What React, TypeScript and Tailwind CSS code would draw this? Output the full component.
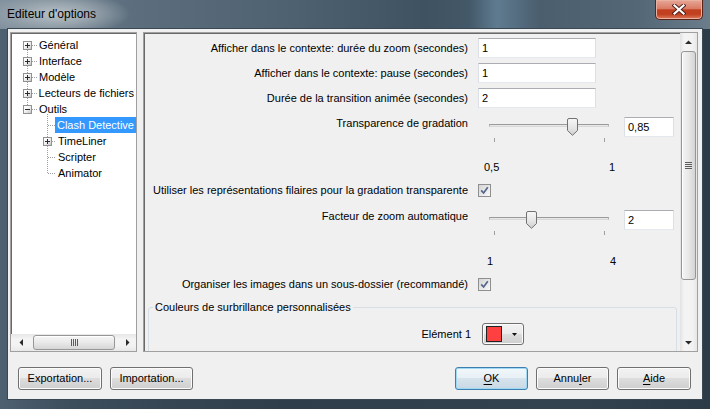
import React from "react";

const ui = "font-['Liberation_Sans','Arial',sans-serif]";

type TreeRow = { label: string; level: 0 | 1; box?: "plus" | "minus"; selected?: boolean };

const treeRows: TreeRow[] = [
  { label: "Général", level: 0, box: "plus" },
  { label: "Interface", level: 0, box: "plus" },
  { label: "Modèle", level: 0, box: "plus" },
  { label: "Lecteurs de fichiers", level: 0, box: "plus" },
  { label: "Outils", level: 0, box: "minus" },
  { label: "Clash Detective", level: 1, selected: true },
  { label: "TimeLiner", level: 1, box: "plus" },
  { label: "Scripter", level: 1 },
  { label: "Animator", level: 1 },
];

function ExpandBox({ minus }: { minus?: boolean }) {
  return (
    <span className="relative flex h-[9px] w-[9px] items-center justify-center border border-[#919191] bg-[linear-gradient(135deg,#ffffff_0%,#f4f4f4_45%,#c9c9c9_100%)]">
      <span className="absolute h-px w-[5px] bg-[#2b2b2b]" />
      {!minus && <span className="absolute h-[5px] w-px bg-[#2b2b2b]" />}
    </span>
  );
}

function TreeLines() {
  const dot = { stroke: "#a0a0a0", strokeDasharray: "1 1", shapeRendering: "crispEdges" as const };
  return (
    <svg className="absolute left-0 top-0" width="123" height="150">
      <line x1="15.5" y1="9" x2="15.5" y2="73" {...dot} />
      {[0, 1, 2, 3, 4].map((i) => (
        <line key={i} x1="20" y1={8.5 + 16 * i} x2="25" y2={8.5 + 16 * i} {...dot} />
      ))}
      <line x1="35.5" y1="77" x2="35.5" y2="137" {...dot} />
      {[5, 6, 7, 8].map((i) => (
        <line key={i} x1="36" y1={8.5 + 16 * i} x2="44" y2={8.5 + 16 * i} {...dot} />
      ))}
    </svg>
  );
}

function Arrow({ dir }: { dir: "up" | "down" | "left" | "right" }) {
  const paths = {
    up: "M0 4 L3.5 0.5 L7 4 Z",
    down: "M0 0 L3.5 3.5 L7 0 Z",
    left: "M4 0 L0.5 3.5 L4 7 Z",
    right: "M0 0 L3.5 3.5 L0 7 Z",
  };
  const horiz = dir === "left" || dir === "right";
  return (
    <svg width={horiz ? 4 : 7} height={horiz ? 7 : 4} viewBox={horiz ? "0 0 4 7" : "0 0 7 4"}>
      <path d={paths[dir]} fill="#2a2a2a" />
    </svg>
  );
}

function Tree() {
  return (
    <div className="flex h-[320px] w-[127px] flex-col border border-[#a0a0a0] bg-white shadow-[inset_1px_1px_0_#696969]">
      <div className="relative flex-1 pl-px pt-[4px]">
        <div className="relative">
          <TreeLines />
          {treeRows.map((r) => (
            <div key={r.label} className="relative flex h-[16px]">
              <div className={r.level === 0 ? "w-[25px] pl-[11px] pt-[4px]" : "w-[44px] pl-[31px] pt-[4px]"}>
                {r.box && <ExpandBox minus={r.box === "minus"} />}
              </div>
              <span
                className={
                  r.selected
                    ? "whitespace-nowrap bg-[#3399ff] px-[2px] leading-[16px] text-white"
                    : "whitespace-nowrap px-[2px] leading-[16px] text-black"
                }
              >
                {r.label}
              </span>
            </div>
          ))}
        </div>
      </div>
      <div className="flex h-[17px] items-center bg-[linear-gradient(180deg,#e6e6e6,#f4f4f4_30%,#f2f2f2_70%,#e8e8e8)] pl-px">
        <div className="flex h-[17px] w-[17px] items-center justify-center">
          <Arrow dir="left" />
        </div>
        <div className="ml-[4px] flex h-[15px] w-[82px] items-center justify-center rounded-[3px] border border-[#979797] bg-[linear-gradient(180deg,#f6f6f6,#e9e9e9_50%,#d6d6d6)] shadow-[inset_0_1px_0_#ffffff]">
          <svg width="7" height="7">
            {[0.5, 2.5, 4.5, 6.5].map((x) => (
              <line key={x} x1={x} y1="0" x2={x} y2="7" stroke="#5c5c5c" shapeRendering="crispEdges" />
            ))}
          </svg>
        </div>
        <div className="ml-auto flex h-[17px] w-[17px] items-center justify-center">
          <Arrow dir="right" />
        </div>
      </div>
    </div>
  );
}

function TextBox({ value, w }: { value: string; w: string }) {
  return (
    <div
      className={`flex h-[20px] ${w} items-center border border-t-[#abadb3] border-x-[#dbdfe6] border-b-[#e3e9ef] bg-white pl-[3px] leading-none`}
    >
      {value}
    </div>
  );
}

function CheckBox() {
  return (
    <span className="flex h-[13px] w-[13px] items-center justify-center border border-[#8e8f8f] bg-[#f4f4f4]">
      <span className="flex h-[11px] w-[11px] items-center justify-center bg-[linear-gradient(135deg,#d4d4d4,#f9f9f9)]">
        <svg width="9" height="9" viewBox="0 0 9 9">
          <path d="M1.2 4.4 L3.6 7 L7.8 1.3" stroke="#53648c" strokeWidth="1.7" fill="none" />
        </svg>
      </span>
    </span>
  );
}

function Slider({ center }: { center: number }) {
  return (
    <div className="relative h-[30px] w-[146px] pt-[9px]">
      <div className="ml-[11px] h-[3px] w-[120px] border border-t-[#9a9a9a] border-x-[#b4b4b4] border-b-[#d8d8d8] bg-[#e8e8e8]" />
      <div className="mt-[11px] flex">
        <span className="ml-[16px] h-[4px] w-px bg-[#a0a0a0]" />
        <span className="ml-[109px] h-[4px] w-px bg-[#a0a0a0]" />
      </div>
      <svg className="absolute top-[3px]" style={{ left: center - 5 }} width="11" height="18" viewBox="0 0 11 18">
        <defs>
          <linearGradient id={`th${center}`} x1="0" y1="0" x2="0" y2="1">
            <stop offset="0" stopColor="#f7f7f7" />
            <stop offset="0.6" stopColor="#e4e4e4" />
            <stop offset="1" stopColor="#cdcdcd" />
          </linearGradient>
        </defs>
        <path
          d="M0.5 2 Q0.5 0.5 2 0.5 H9 Q10.5 0.5 10.5 2 V12.5 L5.5 17.3 L0.5 12.5 Z"
          fill={`url(#th${center})`}
          stroke="#727272"
        />
      </svg>
    </div>
  );
}

function ColorButton() {
  return (
    <div className="ml-[11px] flex h-[22px] w-[42px] items-center rounded-[3px] border border-[#707070] bg-[linear-gradient(180deg,#f2f2f2_0%,#ebebeb_49%,#dddddd_50%,#cfcfcf_100%)] pl-[3px] shadow-[inset_0_0_0_1px_#fbfbfb]">
      <span className="h-[16px] w-[16px] border border-[#222222] bg-[#ff4040]" />
      <span className="ml-[10px] flex">
        <svg width="5" height="3" viewBox="0 0 5 3">
          <path d="M0 0 H5 L2.5 3 Z" fill="#111111" />
        </svg>
      </span>
    </div>
  );
}

function VScroll() {
  return (
    <div className="flex w-[17px] flex-col bg-[linear-gradient(90deg,#e2e2e2,#f4f4f4_25%,#f2f2f2_75%,#e6e6e6)]">
      <div className="flex h-[17px] items-center justify-center">
        <Arrow dir="up" />
      </div>
      <div className="flex-1 px-px pt-px">
        <div className="flex h-[229px] items-center justify-center rounded-[3px] border border-[#959595] bg-[linear-gradient(90deg,#f5f5f5,#e8e8e8_50%,#d4d4d4)] shadow-[inset_1px_0_0_#ffffff]">
          <svg width="7" height="8">
            {[0.5, 2.5, 4.5, 6.5].map((y) => (
              <line key={y} x1="0" y1={y} x2="7" y2={y} stroke="#5c5c5c" shapeRendering="crispEdges" />
            ))}
          </svg>
        </div>
      </div>
      <div className="flex h-[17px] items-center justify-center">
        <Arrow dir="down" />
      </div>
    </div>
  );
}

function FieldRow({ label, value }: { label: string; value: string }) {
  return (
    <div className="flex h-[20px] items-center">
      <div className="w-[324px] whitespace-nowrap text-right">{label}</div>
      <div className="ml-[10px]">
        <TextBox value={value} w="w-[118px]" />
      </div>
    </div>
  );
}

function SliderRow({ label, center, value }: { label: string; center: number; value: string }) {
  return (
    <div className="flex h-[30px]">
      <div className="w-[324px] whitespace-nowrap text-right leading-[16px]">{label}</div>
      <div className="ml-[10px] flex">
        <Slider center={center} />
        <div className="mt-[2px]">
          <TextBox value={value} w="w-[50px]" />
        </div>
      </div>
    </div>
  );
}

function CheckRow({ label }: { label: string }) {
  return (
    <div className="flex h-[16px] items-center">
      <div className="w-[324px] whitespace-nowrap text-right leading-[16px]">{label}</div>
      <div className="ml-[10px] flex">
        <CheckBox />
      </div>
    </div>
  );
}

function Panel() {
  return (
    <div className="flex h-[320px] w-[555px] border border-[#a0a0a0] bg-[#f0f0f0] shadow-[inset_1px_1px_0_#696969]">
      <div className="flex-1 overflow-hidden pt-[5px]">
        <FieldRow label="Afficher dans le contexte: durée du zoom (secondes)" value="1" />
        <div className="mt-[5px]">
          <FieldRow label="Afficher dans le contexte: pause (secondes)" value="1" />
        </div>
        <div className="mt-[5px]">
          <FieldRow label="Durée de la transition animée (secondes)" value="2" />
        </div>
        <div className="mt-[7px]">
          <SliderRow label="Transparence de gradation" center={94} value="0,85" />
        </div>
        <div className="mt-[14px] flex h-[16px] items-center leading-[16px]">
          <span className="ml-[340px] w-[125px]">0,5</span>
          <span>1</span>
        </div>
        <div className="mt-[7px]">
          <CheckRow label="Utiliser les représentations filaires pour la gradation transparente" />
        </div>
        <div className="mt-[10px]">
          <SliderRow label="Facteur de zoom automatique" center={53} value="2" />
        </div>
        <div className="mt-[15px] flex h-[16px] items-center leading-[16px]">
          <span className="ml-[343px] w-[123px]">1</span>
          <span>4</span>
        </div>
        <div className="mt-[7px]">
          <CheckRow label="Organiser les images dans un sous-dossier (recommandé)" />
        </div>
        <fieldset className="ml-[4px] mt-[7px] h-[80px] w-[529px] rounded-[3px] border border-[#d5dfe5]">
          <legend className="ml-[4px] px-[2px] leading-[16px]">Couleurs de surbrillance personnalisées</legend>
          <div className="mt-[8px] flex items-center">
            <div className="w-[322px] text-right">Elément 1</div>
            <ColorButton />
          </div>
        </fieldset>
      </div>
      <VScroll />
    </div>
  );
}

function WinButton({ children, w, isDefault }: { children: React.ReactNode; w: string; isDefault?: boolean }) {
  return (
    <button
      className={
        isDefault
          ? `flex h-[23px] ${w} items-center justify-center rounded-[3px] border border-[#3c7fb1] bg-[linear-gradient(180deg,#f2f7fa_0%,#e7f0f6_49%,#d6e3ec_50%,#c8d8e4_100%)] shadow-[inset_0_0_0_1px_#9fd8f4] text-black`
          : `flex h-[23px] ${w} items-center justify-center rounded-[3px] border border-[#707070] bg-[linear-gradient(180deg,#f2f2f2_0%,#ebebeb_49%,#dddddd_50%,#cfcfcf_100%)] shadow-[inset_0_0_0_1px_#fcfcfc] text-black`
      }
    >
      {children}
    </button>
  );
}

function TitleBar() {
  return (
    <div className="flex h-[29px] shrink-0 items-start bg-[radial-gradient(ellipse_75px_22px_at_55px_14px,#b7c0c6_0%,#9aa6af_45%,transparent_100%),linear-gradient(90deg,#7f8f9c_0%,#5d6f7e_18%,#4f6272_40%,#3f5261_60%,#435868_66%,#5f7b90_70%,#4a5e6e_76%,#546777_90%,#6b7d8b_100%)]">
      <span className="ml-[7px] mt-[6px] whitespace-nowrap text-[12px] leading-[16px] text-black">Editeur d'options</span>
      <div className="ml-auto mr-[7px] flex h-[20px] w-[48px] items-center justify-center rounded-b-[5px] border border-t-0 border-[#5a2418] bg-[linear-gradient(180deg,#e7a898_0%,#d97b65_45%,#c2401f_52%,#c0401f_75%,#de7a5c_100%)] shadow-[inset_0_0_0_1px_#eab0a0]">
        <svg width="14" height="11" viewBox="0 0 14 11">
          <path d="M2.5 1.5 L11.5 9.5 M11.5 1.5 L2.5 9.5" stroke="#4a2018" strokeWidth="4" strokeLinecap="square" />
          <path d="M2.5 1.5 L11.5 9.5 M11.5 1.5 L2.5 9.5" stroke="#ffffff" strokeWidth="2.2" strokeLinecap="square" />
        </svg>
      </div>
    </div>
  );
}

export default function App() {
  return (
    <div
      className={`flex h-[409px] w-[710px] flex-col overflow-hidden ${ui} text-[11px] text-black bg-[linear-gradient(90deg,#4e6170_0%,#3c4d5b_10%,#2f3e4b_40%,#33434f_80%,#2c3b48_100%)]`}
    >
      <TitleBar />
      <div className="mx-[8px] flex h-[370px] shrink-0 flex-col bg-[#f0f0f0] shadow-[0_0_0_1px_#3a4854]">
        <div className="mt-[3px] flex h-[320px] pl-[2px]">
          <Tree />
          <div className="ml-[6px]">
            <Panel />
          </div>
        </div>
        <div className="mt-[15px] flex px-[10px]">
          <WinButton w="w-[84px]">Exportation...</WinButton>
          <div className="ml-[8px]">
            <WinButton w="w-[83px]">Importation...</WinButton>
          </div>
          <div className="ml-auto flex gap-[8px] pr-px">
            <WinButton w="w-[73px]" isDefault>
              <u className="underline-offset-[2px]">O</u>K
            </WinButton>
            <WinButton w="w-[73px]">
              Annu<u className="underline-offset-[2px]">l</u>er
            </WinButton>
            <WinButton w="w-[74px]">
              <u className="underline-offset-[2px]">A</u>ide
            </WinButton>
          </div>
        </div>
      </div>
    </div>
  );
}
